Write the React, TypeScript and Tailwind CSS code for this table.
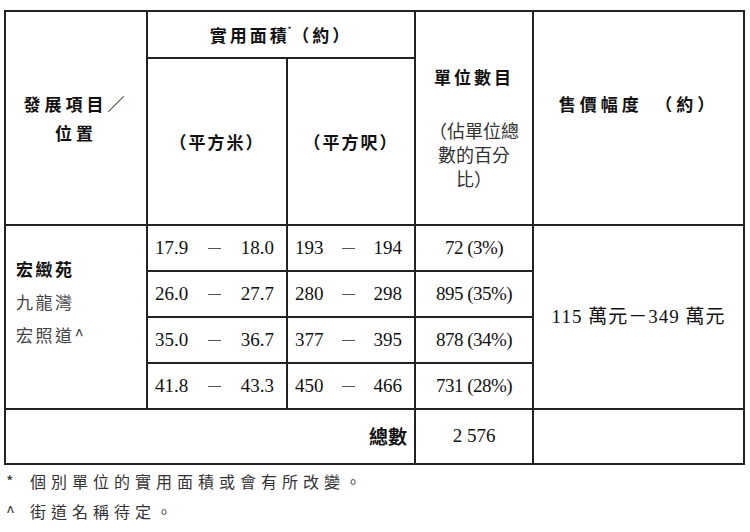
const rows = [
  { m: ["17.9", "18.0"], f: ["193", "194"], units: "72 (3%)" },
  { m: ["26.0", "27.7"], f: ["280", "298"], units: "895 (35%)" },
  { m: ["35.0", "36.7"], f: ["377", "395"], units: "878 (34%)" },
  { m: ["41.8", "43.3"], f: ["450", "466"], units: "731 (28%)" },
];

const sans = "font-['Noto_Sans_CJK_TC',sans-serif]";
const serif = "font-['Liberation_Serif','Noto_Sans_CJK_TC',serif]";
const cell = "border-2 border-[#222]";

function Range({ pair }: { pair: string[] }) {
  return (
    <div className="flex items-center justify-between pl-[7px] pr-[12px]">
      <span>{pair[0]}</span>
      <span className="inline-block w-[13px] h-[1px] bg-[#555]" />
      <span>{pair[1]}</span>
    </div>
  );
}

export default function App() {
  return (
    <div className="w-[750px] h-[532px] bg-white text-[#111] pt-[10px] pl-[4px]">
      <table className="table-fixed border-collapse w-[739px]">
        <colgroup>
          <col className="w-[142px]" />
          <col className="w-[140px]" />
          <col className="w-[128px]" />
          <col className="w-[118px]" />
          <col className="w-[211px]" />
        </colgroup>
        <thead>
          <tr className="h-[47px]">
            <th rowSpan={2} className={`${cell} ${sans} font-bold text-[17px] tracking-[4px] leading-[29px] text-center`}>
              發展項目／
              <br />
              位置
            </th>
            <th colSpan={2} className={`${cell} ${sans} font-bold text-[17px] tracking-[3px] text-center`}>
              <span className="tracking-[3px]">實用面</span>
              <span className="tracking-normal">積</span>
              <span className="inline-block text-[7px] leading-none align-top relative top-[4px] px-[1px] tracking-normal">*</span>
              （約）
            </th>
            <th rowSpan={2} className={`${cell} ${sans} align-top text-center pt-[52px]`}>
              <div className="font-bold text-[17px] tracking-[3px] leading-[26px]">單位數目</div>
              <div className="mt-[28px] text-[18px] leading-[24px] font-normal text-[#333]">
                （佔單位總
                <br />
                數的百分
                <br />
                比）
              </div>
            </th>
            <th rowSpan={2} className={`${cell} ${sans} font-bold text-[17px] tracking-[4px] text-center pb-[28px]`}>
              售價幅度　（約）
            </th>
          </tr>
          <tr className="h-[167px]">
            <th className={`${cell} ${sans} font-bold text-[17px] tracking-[2px] text-center`}>（平方米）</th>
            <th className={`${cell} ${sans} font-bold text-[17px] tracking-[2px] text-center`}>（平方呎）</th>
          </tr>
        </thead>
        <tbody className={`${serif} text-[19px]`}>
          {rows.map((r, i) => (
            <tr key={i} className="h-[46px]">
              {i === 0 && (
                <td rowSpan={4} className={`${cell} ${sans} align-top pt-[26px] pl-[10px] text-[17px] tracking-[2.5px] leading-[33px]`}>
                  <div className="font-bold text-[#111]">宏緻苑</div>
                  <div className="text-[#444]">九龍灣</div>
                  <div className="text-[#444]">宏照道^</div>
                </td>
              )}
              <td className={cell}>
                <Range pair={r.m} />
              </td>
              <td className={cell}>
                <Range pair={r.f} />
              </td>
              <td className={`${cell} text-center tracking-[-0.5px]`}>{r.units}</td>
              {i === 0 && (
                <td rowSpan={4} className={`${cell} text-center tracking-[1px]`}>
                  115 萬元－349 萬元
                </td>
              )}
            </tr>
          ))}
          <tr className="h-[55px]">
            <td colSpan={3} className={`${cell} ${sans} text-right pr-[7px] font-bold text-[19px]`}>
              總數
            </td>
            <td className={`${cell} text-center`}>2 576</td>
            <td className={cell}></td>
          </tr>
        </tbody>
      </table>
      <div className={`${sans} text-[16px] text-[#333] tracking-[5px] mt-[1px] leading-[30px]`}>
        <div className="flex">
          <span className="w-[26px] pl-[2px]">*</span>
          <span>個別單位的實用面積或會有所改變。</span>
        </div>
        <div className="flex">
          <span className="w-[26px] pl-[2px]">^</span>
          <span>街道名稱待定。</span>
        </div>
      </div>
    </div>
  );
}
